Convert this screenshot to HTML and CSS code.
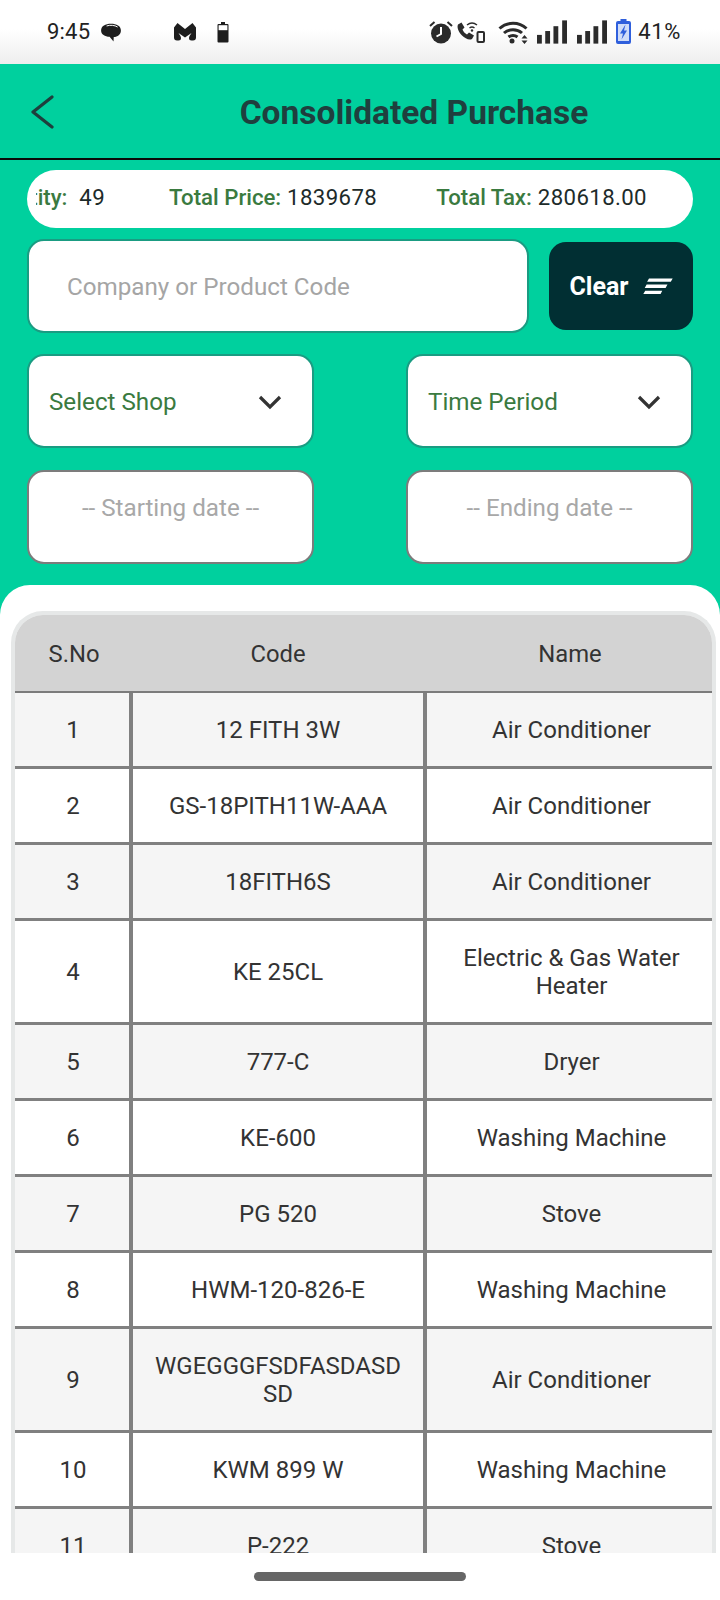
FILE: index.html
```html
<!DOCTYPE html>
<html lang="en">
<head>
<meta charset="utf-8">
<title>Consolidated Purchase</title>
<link rel="stylesheet" href="styles.css">
</head>
<body>
<div class="screen">
  <div class="status">
    <div class="status-left">
      <span class="time">9:45</span>
      <svg class="ic-chat" viewBox="0 0 20 20"><path d="M10 1.500c5 0 9 1.900 9 6.200 0 3.600-3 5.700-6.500 6l-.2 4-3.600-4.200C4.500 13.300 1 11.300 1 7.700 1 3.400 5 1.500 10 1.500z" fill="#1d1d1d"/><path d="M6 3.600c3-1 7.500-.8 10 1" stroke="#fff" stroke-width=".9" fill="none"/></svg>
      <svg class="ic-m" viewBox="0 0 24 20"><path d="M1 5.500 4.500 1 12 7l7.500-6L23 5.500V15.500a3 3 0 0 1-3 3h-1.500a2.500 2.500 0 0 1-2.500-2.500c0-1.500 1.500-3.500 2.500-5L12 15.500 5.500 11c1 1.500 2.500 3.500 2.500 5a2.500 2.500 0 0 1-2.500 2.500H4a3 3 0 0 1-3-3z" fill="#1d1d1d"/></svg>
      <svg class="ic-batt" viewBox="0 0 12 22"><path d="M4 1h4v2h2.500a1 1 0 0 1 1 1v16.500a1 1 0 0 1-1 1h-9a1 1 0 0 1-1-1V4a1 1 0 0 1 1-1H4z" fill="#1d1d1d"/><rect x="1.600" y="4.200" width="8.800" height="5" fill="#fff"/></svg>
    </div>
    <div class="status-right">
      <svg class="ic-alarm" viewBox="0 0 24 24"><circle cx="12" cy="13.500" r="10" fill="#2b2b2b"/><path d="M12 7v7l-4.500 2.500" stroke="#fff" stroke-width="2" fill="none"/><path d="M1 6 5.500 2M23 6 18.500 2" stroke="#2b2b2b" stroke-width="2"/></svg>
      <svg class="ic-call" viewBox="0 0 30 22"><path d="M3 3.500 6.500 1.500l3 5-2 2c.8 2 2.500 4 4.500 5l2-2 5 3-2 3.500c-3 1.500-7-.5-10-3.500S1.500 6.500 3 3.500z" fill="#2b2b2b"/><path d="M12 4c3-2.500 7-2.500 10 0M14.500 7c1.700-1.300 3.300-1.300 5 0" stroke="#2b2b2b" stroke-width="1.400" fill="none"/><circle cx="17" cy="9.500" r="1.200" fill="#2b2b2b"/><rect x="22.500" y="11" width="6.500" height="10" rx="1" fill="none" stroke="#2b2b2b" stroke-width="2"/></svg>
      <svg class="ic-wifi" viewBox="0 0 30 24"><path d="M1.500 8.500c7.500-7 19.500-7 27 0M6 13c5-4.500 13-4.500 18 0M10.500 17c2.500-2 6.500-2 9 0" stroke="#2b2b2b" stroke-width="3" fill="none"/><circle cx="14" cy="21" r="2.500" fill="#2b2b2b"/><path d="M23.500 18.500h6l-3-3.500zM23.500 20.500h6l-3 3.500z" fill="#2b2b2b"/></svg>
      <svg class="ic-sig" viewBox="0 0 31 24"><rect x="0" y="15" width="5" height="9" fill="#2b2b2b"/><rect x="8.500" y="11" width="5" height="13" fill="#2b2b2b"/><rect x="17" y="6" width="5" height="18" fill="#2b2b2b"/><rect x="26" y="0" width="5" height="24" fill="#2b2b2b"/></svg>
      <svg class="ic-sig sig2" viewBox="0 0 31 24"><rect x="0" y="15" width="5" height="9" fill="#2b2b2b"/><rect x="8.500" y="11" width="5" height="13" fill="#2b2b2b"/><rect x="17" y="6" width="5" height="18" fill="#2b2b2b"/><rect x="26" y="0" width="5" height="24" fill="#2b2b2b"/></svg>
      <svg class="ic-charge" viewBox="0 0 15 25"><path d="M4.500 0h6v2H13a2 2 0 0 1 2 2v19a2 2 0 0 1-2 2H2a2 2 0 0 1-2-2V4a2 2 0 0 1 2-2h2.500z" fill="#2f5fdc"/><rect x="2" y="5" width="11" height="17" fill="#cfdcf8"/><path d="M9.500 5.500 4 14.500h3l-1.500 6 5.500-9H8z" fill="#2f5fdc"/></svg>
      <span class="pct">41%</span>
    </div>
  </div>

  <main class="page">
    <header class="topbar">
      <svg class="ic-back" viewBox="0 0 24 36"><path d="M22 3 3 18l19 15" stroke="#1e3f3d" stroke-width="3.200" fill="none" stroke-linecap="round" stroke-linejoin="round"/></svg>
      <h1 class="title">Consolidated Purchase</h1>
    </header>

    <div class="summary">
      <div class="summary-track">
        <span class="stat"><b>Total Quantity:</b> <span class="num-gap">49</span></span>
        <span class="stat stat-price"><b>Total Price:</b> 1839678</span>
        <span class="stat"><b>Total Tax:</b> 280618.00</span>
      </div>
    </div>

    <div class="search-row">
      <div class="field search">Company or Product Code</div>
      <button class="clear">Clear
        <svg class="ic-filter" viewBox="0 0 31 19"><path d="M6 1.500h25l-2 3.500H4zM3.500 8h22l-2 3.500H1.500zM2 14.500h18l-1.800 3.500H0z" fill="#fff"/></svg>
      </button>
    </div>

    <div class="pair">
      <div class="field select"><span>Select Shop</span><svg class="ic-chev" viewBox="0 0 24 15"><path d="M2 2l10 10L22 2" stroke="#333" stroke-width="3.200" fill="none"/></svg></div>
      <div class="field select"><span>Time Period</span><svg class="ic-chev" viewBox="0 0 24 15"><path d="M2 2l10 10L22 2" stroke="#333" stroke-width="3.200" fill="none"/></svg></div>
    </div>

    <div class="pair dates">
      <div class="field date">-- Starting date --</div>
      <div class="field date">-- Ending date --</div>
    </div>

    <section class="panel">
      <div class="card">
        <div class="thead">
          <div class="th">S.No</div><div class="th">Code</div><div class="th">Name</div>
        </div>
        <div class="row odd"><div class="td">1</div><div class="td">12 FITH 3W</div><div class="td">Air Conditioner</div></div>
        <div class="row"><div class="td">2</div><div class="td">GS-18PITH11W-AAA</div><div class="td">Air Conditioner</div></div>
        <div class="row odd"><div class="td">3</div><div class="td">18FITH6S</div><div class="td">Air Conditioner</div></div>
        <div class="row tall"><div class="td">4</div><div class="td">KE 25CL</div><div class="td">Electric &amp; Gas Water Heater</div></div>
        <div class="row odd"><div class="td">5</div><div class="td">777-C</div><div class="td">Dryer</div></div>
        <div class="row"><div class="td">6</div><div class="td">KE-600</div><div class="td">Washing Machine</div></div>
        <div class="row odd"><div class="td">7</div><div class="td">PG 520</div><div class="td">Stove</div></div>
        <div class="row"><div class="td">8</div><div class="td">HWM-120-826-E</div><div class="td">Washing Machine</div></div>
        <div class="row odd tall"><div class="td">9</div><div class="td">WGEGGGFSDFASDASD<br>SD</div><div class="td">Air Conditioner</div></div>
        <div class="row"><div class="td">10</div><div class="td">KWM 899 W</div><div class="td">Washing Machine</div></div>
        <div class="row odd"><div class="td">11</div><div class="td">P-222</div><div class="td">Stove</div></div>
      </div>
    </section>
  </main>

  <div class="navbar"><div class="handle"></div></div>
</div>
</body>
</html>
```
FILE: styles.css
```css
* { box-sizing: border-box; }
html, body { margin: 0; padding: 0; background: #fff; }
body { font-family: Roboto, "Noto Sans", sans-serif; color: #2f2f2f; }
.screen { width: 720px; height: 1600px; display: flex; flex-direction: column; overflow: hidden; }

.status { height: 64px; flex: none; display: flex; justify-content: space-between; align-items: flex-start; padding: 19px 39px 0 47px; background: linear-gradient(#ffffff 0%, #ffffff 45%, #eeeeee 100%); }
.status-left, .status-right { display: flex; align-items: center; height: 25px; }
.time { font-size: 22px; color: #222; letter-spacing: .2px; }
.ic-chat { width: 22px; height: 22px; margin-left: 10px; margin-top: 2px; }
.ic-m { width: 24px; height: 20px; margin-left: 51px; }
.ic-batt { width: 12px; height: 22px; margin-left: 20px; }
.ic-alarm { width: 24px; height: 24px; }
.ic-call { width: 30px; height: 22px; margin-left: 2px; }
.ic-wifi { width: 30px; height: 24px; margin-left: 13px; }
.ic-sig { width: 30px; height: 24px; margin-left: 9px; }
.ic-sig.sig2 { margin-left: 10px; }
.ic-charge { width: 15px; height: 25px; margin-left: 9px; }
.pct { font-size: 22px; margin-left: 7px; color: #222; letter-spacing: .6px; }

.page { flex: 1; min-height: 0; display: flex; flex-direction: column; background: #00d09e; }
.topbar { height: 96px; flex: none; display: flex; align-items: center; justify-content: center; border-bottom: 2px solid #0a0a0a; position: relative; }
.ic-back { position: absolute; left: 30px; top: 30px; width: 24px; height: 36px; }
.title { margin: 0; font-size: 33.500px; font-weight: 700; color: #1f3f3e; padding: 2px 0 0 108px; }

.summary { flex: none; margin: 10px 27px 0; height: 58px; background: #fff; border-radius: 29px; padding: 0 46px 0 9px; display: flex; }
.summary-track { flex: 1; min-width: 0; overflow: hidden; display: flex; justify-content: flex-end; align-items: center; gap: 59px; padding-bottom: 4px; white-space: nowrap; font-size: 22.200px; color: #1d2b2a; letter-spacing: .4px; }
.stat { flex: none; }
.stat-price { margin-left: 5px; }
.stat b { font-weight: 500; color: #3a7a3f; letter-spacing: 0; }
.num-gap { margin-left: 6px; }

.field { background: #fff; border: 2px solid #1a9c82; border-radius: 17px; display: flex; align-items: center; font-size: 24.200px; }
.search-row { flex: none; display: flex; margin: 11px 27px 0 27px; gap: 20px; align-items: center; }
.search { flex: 1; height: 94px; padding: 2px 0 0 38px; color: #a5a5a5; }
.clear { width: 144px; height: 88px; background: #012f33; border: 0; border-radius: 17px; color: #fff; font: 700 25px Roboto, sans-serif; display: flex; align-items: center; justify-content: center; gap: 14px; }
.ic-filter { width: 30px; height: 18px; }

.pair { flex: none; display: flex; justify-content: space-between; margin: 21px 27px 0; }
.pair .field { width: 287px; height: 94px; }
.select { justify-content: space-between; padding: 2px 30px 0 20px; color: #3a7a3f; }
.ic-chev { width: 24px; height: 15px; }
.dates { margin-top: 22px; }
.date { justify-content: center; align-items: flex-start; padding-top: 22px; color: #a8a8a8; border-color: #7c7c7c !important; }

.panel { flex: 1; min-height: 0; margin-top: 21px; background: #fff; border-radius: 30px 30px 0 0; padding: 26px 4px 0 11px; overflow: hidden; }
.card { border: 4px solid #e6e8e8; border-bottom: 0; border-radius: 32px 32px 0 0; overflow: hidden; }
.thead { height: 78px; display: grid; grid-template-columns: 118px 290px 1fr; background: #d3d3d3; border-bottom: 2.500px solid #7b7b7b; align-items: center; }
.th { text-align: center; font-size: 23.800px; color: #333; padding-top: 2px; }
.th:last-child { padding-left: 5px; }
.row { height: 76px; display: grid; grid-template-columns: 118px 294px 1fr; background: #fff; border-bottom: 3.500px solid #808080; }
.row.odd { background: #f5f5f5; }
.row.tall { height: 104px; }
.td { display: flex; align-items: center; justify-content: center; text-align: center; font-size: 24px; line-height: 28px; color: #333; padding: 0 12px; border-right: 4px solid #808080; }
.td:first-child { padding-left: 14px; }
.td:last-child { border-right: 0; padding: 0 20px 0 24px; }

.navbar { height: 47px; flex: none; background: #fff; display: flex; justify-content: center; padding-top: 19px; }
.handle { width: 212px; height: 9px; background: #666; border-radius: 5px; }
```
